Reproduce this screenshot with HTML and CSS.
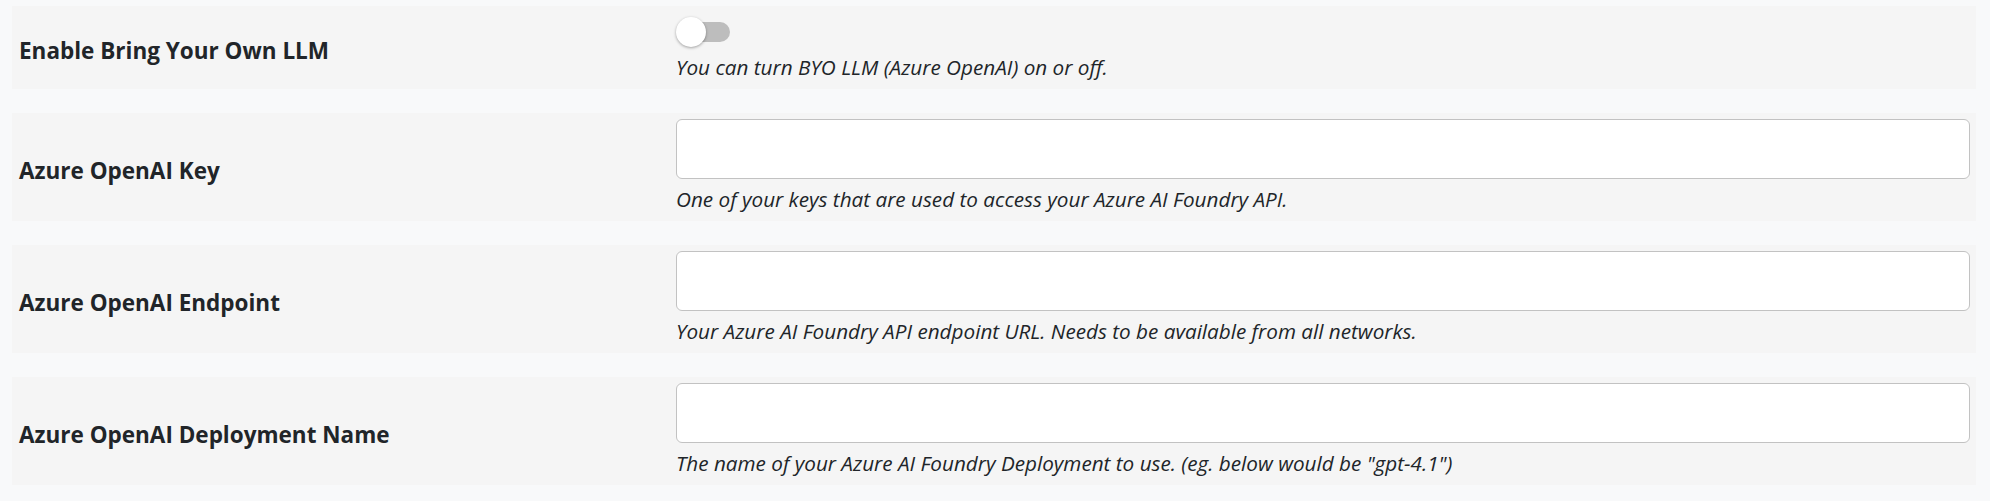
FILE: index.html
```html
<!DOCTYPE html>
<html lang="en">
  <head>
    <meta charset="UTF-8" />
    <meta name="viewport" content="width=device-width, initial-scale=1.0" />
    <title>BYO LLM Settings</title>
    <link rel="stylesheet" href="styles.css">
  </head>
  <body>
    <!-- Settings list -->
    <div class="settings">
      <div class="setting-row">
        <div class="setting-label">Enable Bring Your Own LLM</div>
        <div class="setting-value">
          <label class="toggle">
            <input type="checkbox" />
            <span class="toggle-track"></span>
            <span class="toggle-knob"></span>
          </label>
          <div class="help">You can turn BYO LLM (Azure OpenAI) on or off.</div>
        </div>
      </div>

      <div class="setting-row">
        <div class="setting-label">Azure OpenAI Key</div>
        <div class="setting-value">
          <input class="text-input" type="text" />
          <div class="help">One of your keys that are used to access your Azure AI Foundry API.</div>
        </div>
      </div>

      <div class="setting-row">
        <div class="setting-label">Azure OpenAI Endpoint</div>
        <div class="setting-value">
          <input class="text-input" type="text" />
          <div class="help">Your Azure AI Foundry API endpoint URL. Needs to be available from all networks.</div>
        </div>
      </div>

      <div class="setting-row">
        <div class="setting-label">Azure OpenAI Deployment Name</div>
        <div class="setting-value">
          <input class="text-input" type="text" />
          <div class="help">The name of your Azure AI Foundry Deployment to use. (eg. below would be "gpt-4.1")</div>
        </div>
      </div>
    </div>
  </body>
</html>
```

FILE: styles.css
```css
body {
  font-family: "Open Sans", "Noto Sans", Arial, sans-serif;
  margin: 0;
  padding: 0;
  background-color: #f8f9fa;
  color: #212529;
}

/* Settings list */
.settings {
  display: flex;
  flex-direction: column;
  gap: 24px;
  padding: 6px 14px 0 12px;
}

.setting-row {
  display: grid;
  grid-template-columns: 657px 1fr;
  background-color: #f5f5f5;
  padding: 6px 6px 7px 7px;
}

.setting-label {
  display: flex;
  align-items: center;
  padding-top: 7px;
  font-size: 22.5px;
  font-weight: 700;
}

.setting-value {
  display: flex;
  flex-direction: column;
  align-items: flex-start;
}

.help {
  margin-top: 5px;
  font-size: 20.7px;
  font-style: italic;
  line-height: 30px;
}

/* Text inputs */
.text-input {
  box-sizing: border-box;
  width: 100%;
  height: 60px;
  margin: 0;
  border: 1px solid #c2c2c2;
  border-radius: 6px;
  background-color: white;
  font-size: 18px;
}

/* Toggle switch */
.toggle {
  position: relative;
  display: block;
  width: 54px;
  height: 30px;
  margin-top: 5px;
  cursor: pointer;
}

.toggle input {
  display: none;
}

.toggle-track {
  position: absolute;
  left: 1px;
  top: 5px;
  width: 53px;
  height: 20px;
  border-radius: 10px;
  background-color: #bdbdbd;
}

.toggle-knob {
  position: absolute;
  left: 0;
  top: 0;
  width: 30px;
  height: 30px;
  border-radius: 50%;
  background-color: white;
  box-shadow: 0 1px 3px rgba(0, 0, 0, 0.35);
}
```
